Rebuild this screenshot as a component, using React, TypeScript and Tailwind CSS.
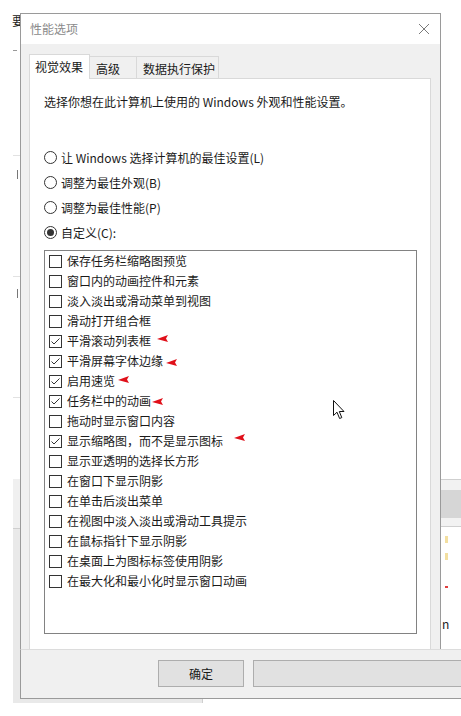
import React from "react";

type Option = {
  label: string;
  checked?: boolean;
  // red annotation arrow placed after the label
  arrow?: string;
};

const options: Option[] = [
  { label: "保存任务栏缩略图预览" },
  { label: "窗口内的动画控件和元素" },
  { label: "淡入淡出或滑动菜单到视图" },
  { label: "滑动打开组合框" },
  { label: "平滑滚动列表框", checked: true, arrow: "ml-[6px] -translate-y-[3px]" },
  { label: "平滑屏幕字体边缘", checked: true, arrow: "ml-[3px] translate-y-[1px]" },
  { label: "启用速览", checked: true, arrow: "ml-[3px] -translate-y-[2px]" },
  { label: "任务栏中的动画", checked: true, arrow: "ml-[1px]" },
  { label: "拖动时显示窗口内容" },
  { label: "显示缩略图，而不是显示图标", checked: true, arrow: "ml-[11px] -translate-y-[4px]" },
  { label: "显示亚透明的选择长方形" },
  { label: "在窗口下显示阴影" },
  { label: "在单击后淡出菜单" },
  { label: "在视图中淡入淡出或滑动工具提示" },
  { label: "在鼠标指针下显示阴影" },
  { label: "在桌面上为图标标签使用阴影" },
  { label: "在最大化和最小化时显示窗口动画" },
];

const radios = [
  { label: "让 Windows 选择计算机的最佳设置(L)" },
  { label: "调整为最佳外观(B)" },
  { label: "调整为最佳性能(P)" },
  { label: "自定义(C):", selected: true },
];

function Radio({ selected }: { selected?: boolean }) {
  return (
    <span className="flex h-[13px] w-[13px] shrink-0 items-center justify-center rounded-full border border-[#333333] bg-white">
      {selected ? <span className="h-[7px] w-[7px] rounded-full bg-[#333333]" /> : null}
    </span>
  );
}

function Checkbox({ checked }: { checked?: boolean }) {
  return (
    <span className="flex h-[13px] w-[13px] shrink-0 items-center justify-center border border-[#333333] bg-white">
      {checked ? (
        <svg width="11" height="11" viewBox="0 0 11 11" fill="none">
          <polyline points="1.5,5.5 4,8 9.5,2.5" stroke="#333333" strokeWidth="1" />
        </svg>
      ) : null}
    </span>
  );
}

function RedArrow({ className }: { className: string }) {
  return (
    <svg width="11" height="7" viewBox="0 0 11 7" className={className}>
      <polygon points="0,4 11,0 9,3.5 11,7" fill="#e0101a" />
    </svg>
  );
}

export default function App() {
  return (
    <div className="relative h-[716px] w-[461px] overflow-hidden bg-white font-['Noto_Sans_CJK_SC','Microsoft_YaHei',sans-serif] text-[12px] text-[#1a1a1a]">
      {/* window behind the dialog */}
      <span className="absolute left-[12px] top-[13px] leading-[16px] text-[#222]">要</span>
      <span className="absolute left-[13px] top-[50px] h-px w-[4px] bg-[#999]" />
      <span className="absolute left-[13px] top-[155px] h-px w-[8px] bg-[#e2e2e2]" />
      <span className="absolute left-[17px] top-[170px] h-[9px] w-px bg-[#777]" />
      <span className="absolute left-[13px] top-[276px] h-px w-[8px] bg-[#e2e2e2]" />
      <span className="absolute left-[17px] top-[289px] h-[9px] w-px bg-[#777]" />
      <span className="absolute left-[13px] top-[397px] h-px w-[8px] bg-[#e2e2e2]" />
      <div className="absolute left-[13px] top-[479px] h-[49px] w-[10px] bg-[#f0f0f0]" />
      <div className="absolute left-[13px] top-[528px] h-[175px] w-[190px] border-r border-t border-[#cfcfcf] bg-[#e9e9e9]" />
      <div className="absolute left-[441px] top-[479px] h-[48px] w-[20px] border-y border-[#cfcfcf] bg-[#f2f2f2]">
        <div className="mt-[10px] h-[28px] bg-[#d6d6d6]" />
      </div>
      <span className="absolute left-[445px] top-[536px] h-[7px] w-[3px] bg-[#f3dfa0]" />
      <span className="absolute left-[445px] top-[553px] h-[7px] w-[3px] bg-[#f3dfa0]" />
      <span className="absolute left-[445px] top-[586px] h-[2px] w-[3px] bg-[#e04040]" />
      <span className="absolute left-[442px] top-[616px] leading-[16px] text-[#222]">n</span>

      {/* dialog */}
      <div className="relative ml-[20px] pt-[13px]">
        <div className="w-[421px] border-x border-t border-[#9a9a9a]">
          <div className="flex h-[30px] items-center justify-between bg-white pl-[9px] pr-[10px]">
            <span className="leading-[16px] text-[#8a8a8a]">性能选项</span>
            <svg width="12" height="12" viewBox="0 0 12 12">
              <path d="M1 1 L11 11 M11 1 L1 11" stroke="#7a7a7a" strokeWidth="1" />
            </svg>
          </div>

          <div className="bg-[#f0f0f0] pl-[8px] pr-[9px] pt-[10px]">
            <div className="flex h-[24px] items-end">
              <div className="relative z-10 -mb-px flex h-[25px] w-[61px] items-center border-x border-t border-[#d9d9d9] bg-white pl-[5px]">
                <span className="leading-[16px]">视觉效果</span>
              </div>
              <div className="flex h-[22px] w-[47px] items-center border-r border-t border-[#d9d9d9] pl-[6px] pt-[2px]">
                <span className="leading-[16px]">高级</span>
              </div>
              <div className="flex h-[22px] w-[82px] items-center border-r border-t border-[#d9d9d9] pl-[6px] pt-[2px]">
                <span className="leading-[16px]">数据执行保护</span>
              </div>
            </div>

            <div className="border-x border-t border-[#d9d9d9] bg-white pb-[15px] pl-[14px] pr-[13px] pt-[15px]">
              <p className="leading-[16px]">选择你想在此计算机上使用的 Windows 外观和性能设置。</p>

              <div className="mt-[35px] flex flex-col">
                {radios.map((r) => (
                  <div key={r.label} className="flex h-[25px] items-center gap-[4px]">
                    <Radio selected={r.selected} />
                    <span className="leading-[16px]">{r.label}</span>
                  </div>
                ))}
              </div>

              <div className="mt-[5px] h-[384px] border border-[#828282] bg-white pl-[4px]">
                {options.map((o) => (
                  <div key={o.label} className="flex h-[20px] items-center">
                    <Checkbox checked={o.checked} />
                    <span className="ml-[5px] leading-[16px]">{o.label}</span>
                    {o.arrow ? <RedArrow className={o.arrow} /> : null}
                  </div>
                ))}
              </div>
            </div>
          </div>
        </div>

        <div className="flex h-[50px] w-[441px] gap-[9px] border-b border-l border-t border-b-[#9a9a9a] border-l-[#9a9a9a] border-t-[#dcdcdc] bg-[#f0f0f0] pl-[137px] pt-[10px]">
          <button className="flex h-[27px] w-[86px] shrink-0 items-center justify-center border border-[#adadad] bg-[#e1e1e1] text-[12px] leading-[16px]">
            确定
          </button>
          <button className="h-[27px] w-[230px] shrink-0 border border-[#adadad] bg-[#e1e1e1]" />
        </div>

        {/* mouse pointer */}
        <svg width="13" height="20" viewBox="0 0 13 20" className="absolute left-[313px] top-[400px]">
          <path
            d="M0.5 0.5 L0.5 15.5 L4 12.2 L6.6 18.5 L8.8 17.6 L6.3 11.5 L11 11.5 Z"
            fill="white"
            stroke="#111"
            strokeWidth="1"
            strokeLinejoin="round"
          />
        </svg>
      </div>
    </div>
  );
}
